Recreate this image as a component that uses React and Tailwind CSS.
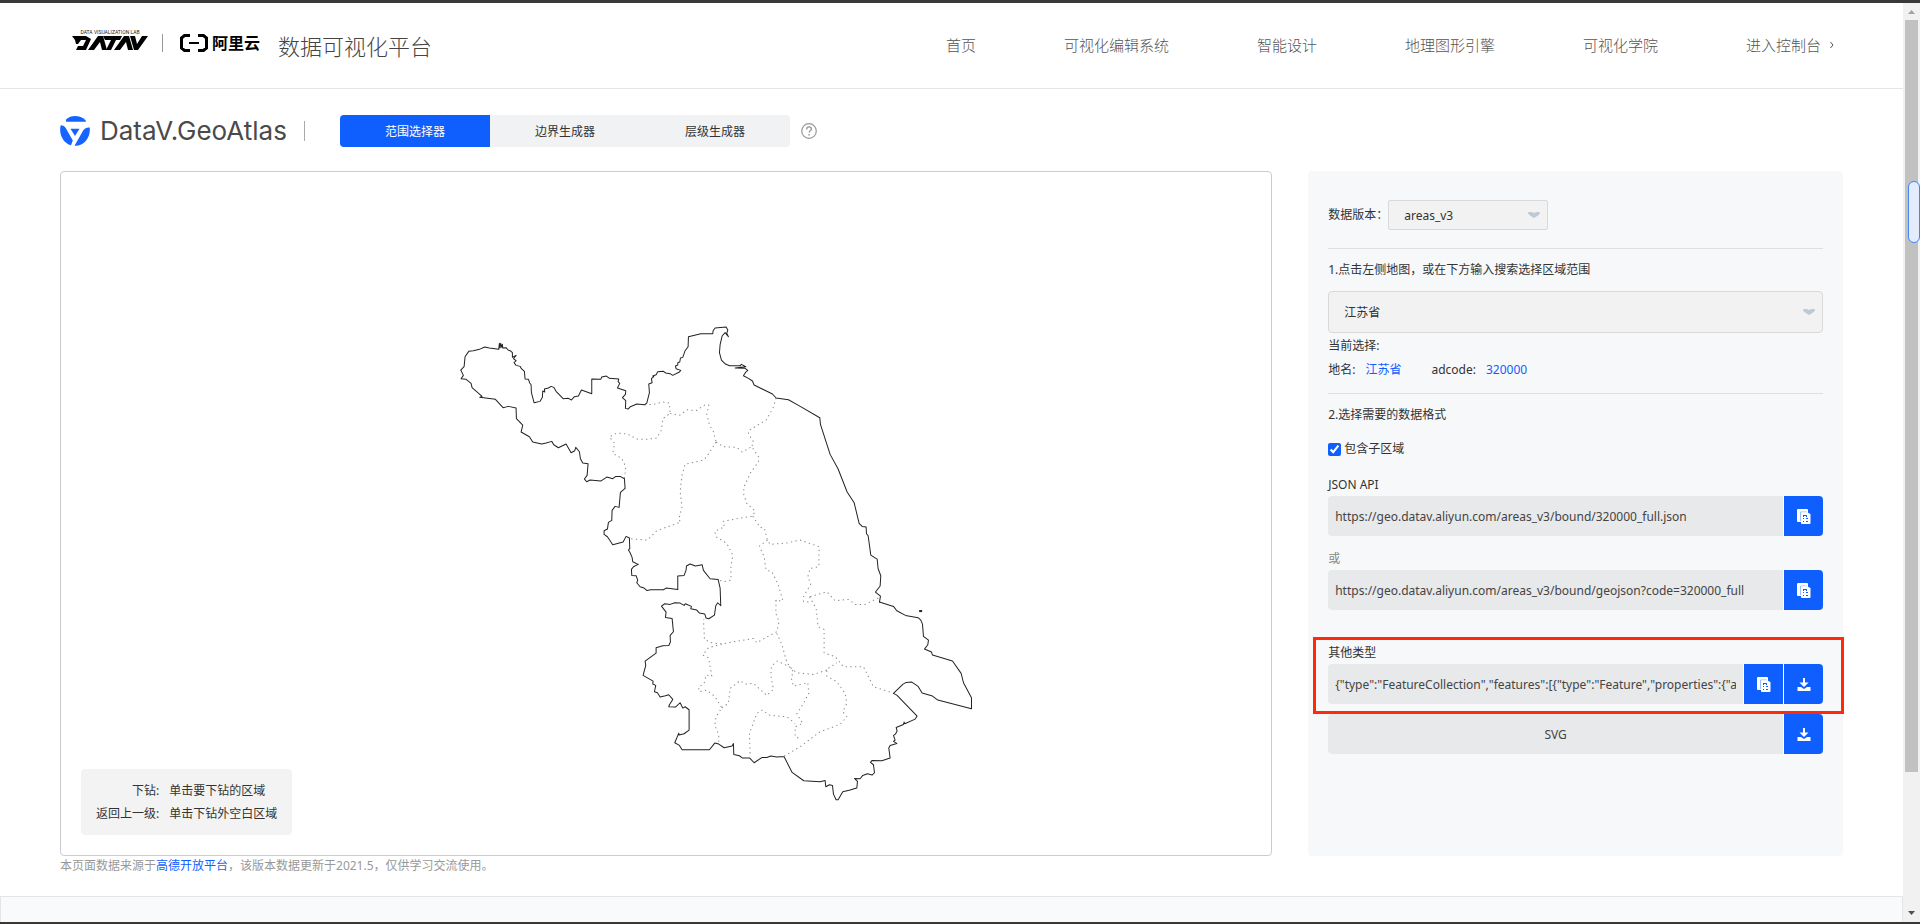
const OUTLINE_NW =
  "M594 763 578 755 576 742 570 728 565 720 569 716 568 684 558 679 549 696 518 704 502 680 492 673 492 662 502 657 505 637 515 631 516 601 525 589 537 592 541 547 555 535 553 506 540 499 527 499 518 506 500 501 482 513 450 510 440 515 433 507 441 496 444 461 428 459 421 446 418 425 407 412 404 422 393 428 378 402 355 413 341 404 335 394 318 399 305 402 278 396 268 380 243 366 248 345 229 326 228 294 205 289 189 293 166 268 119 262 126 259 96 233 93 220 78 208 63 206 70 196 62 180 72 170 75 140 86 124 100 122 118 118 134 111 148 114 176 118 178 100 180 114 182 100 185 112 187 103 188 114 198 113 204 120 212 123 217 128 217 142 228 136 220 146 228 152 222 158 228 166 240 169 244 176 253 184 255 207 265 208 269 219 273 224 274 248 282 278 300 274 307 262 308 243 314 246 313 237 325 234 333 229 341 232 348 244 369 266 385 265 394 270 403 260 415 258 424 240 455 251 455 207 482 208 485 201 499 198 508 205 536 207 534 215 539 220 532 234 557 242 556 253 547 263 557 272 556 295 564 297 571 290 590 282 614 284 620 279 628 248 626 222 636 218 634 206 641 200 638 198 648 194 653 185 670 184 677 189 690 191 698 196 718 186 722 181 708 176 706 168 713 165 713 158 719 156 721 144 728 142 735 122 744 110 745 80 782 71 818 71 819 62 825 54 858 51 863 60 860 70 865 80 855 68 846 78 840 104 838 128 844 150 856 162 868 167 900 167";
const OUTLINE_EAST =
  "M180 167 184 163 197 170 165 174 195 175 203 181 197 186 190 197 205 205 217 213 222 225 277 252 288 264 325 269 355 286 419 323 421 343 450 433 474 477 501 546 522 578 537 640 546 649 558 651 559 671 564 677 572 735 591 747 594 776 602 797 600 828 586 846 601 858 598 876";
const OUTLINE_SOUTH =
  "M898 126 940 139 950 152 976 166 1014 173 1022 180 1027 192 1030 229 1045 240 1043 254 1033 267 1054 276 1057 285 1117 303 1143 340 1150 368 1174 413 1174 446 1073 420 1057 408 1026 399 1014 379 995 366 978 367 968 373 940 400 950 405 1011 468 1005 477 974 491 972 486 970 493 948 502 951 513 946 522 940 526 945 540 940 544 950 550 930 556 926 564 930 594 905 602 876 601 871 607 880 614 883 638 876 645 862 641 848 646 840 656 823 655 832 664 830 684 822 686 810 690 788 695 774 719 768 719 760 702 757 676 748 674 737 680 735 661 720 665 671 662 636 637 612 590 600 590 590 591 572 588 560 592 546 592 522 608 509 594 487 594 478 587 461 583 460 550 456 558 432 563 416 552 404 549 388 569 306 569 298 556 284 548 296 519 297 525 312 521 327 510 327 449 315 440 308 444 300 428 286 441 266 440 268 434 278 418 266 404 256 407 240 411 232 398 223 395 227 376 218 372 219 363 189 346 197 316 195 303 228 279 228 263 248 257 266 256 271 246 270 226 280 215 276 175 256 172 258 156 244 138 254 131 270 133 284 128 300 129 312 136 316 131 334 139 332 146 350 150 358 159 374 162 378 174 386 176 403 165 407 137 413 128 422 137 420 84 414 58 390 56 370 31 366 14 346 18 330 12 319 18 318 30 312 46 293 48 293 88 258 84 250 89 212 89 200 91 192 84 180 80 170 68 173 60 168 47 155 46 154 28 160 20 174 13";

const INNER_NW =
  "M614 284 640 283 668 276 688 279 690 310 668 326 664 360 650 384 620 388 590 387 562 372 545 370 530 369 508 381 524 400 518 430 545 445 557 470 553 506 M690 310 718 316 742 299 768 302 795 284 806 285 800 312 808 345 820 365 828 396 M828 396 800 440 790 450 735 463 726 495 720 545 726 590 716 628 722 636 650 662 622 690 568 686";
const INNER_EAST =
  "M108 396 130 410 170 412 186 426 215 410 235 440 235 455 210 490 192 530 190 550 200 580 225 603 218 618 160 628 128 634 133 650 104 664 108 680 140 700 158 735 152 775 153 810 130 815 114 809 M288 264 278 296 258 330 205 362 205 372 220 395 215 410 M218 618 240 652 253 655 262 690 270 703 320 699 360 690 417 710 416 770 390 775 383 800 392 822 370 860 370 874 388 876 M262 690 238 708 252 740 258 780 275 785 295 825 308 872 285 872";
const INNER_SOUTH =
  "M588 120 587 160 597 185 590 215 576 222 530 248 520 235 450 247 425 252 395 248 373 238 370 178 M590 220 606 255 618 300 628 320 650 338 700 343 740 330 M425 252 385 263 368 285 385 293 392 330 395 348 378 345 372 370 355 382 358 395 380 390 405 410 425 443 408 470 404 495 416 525 416 550 M425 443 445 430 450 385 480 362 495 372 520 370 560 406 580 388 572 345 574 318 592 303 628 320 640 335 633 352 640 378 683 368 686 400 670 430 650 462 668 490 645 500 645 530 660 536 M510 580 508 520 530 460 546 450 570 466 620 470 645 490 M612 588 660 560 720 515 780 493 800 470 788 455 800 430 795 400 770 365 740 348 740 328 770 308 M688 110 708 145 714 200 732 208 732 278 765 290 790 320 850 320 880 380 918 392 940 400 M690 110 740 95 765 122 805 118 825 133 855 133 898 112";

const NW = "translate(440 310) scale(0.33333)";
const EAST = "translate(680 310) scale(0.33333)";
const SOUTH = "translate(580 560) scale(0.33333)";

function ProvinceMap() {
  return (
    <svg viewBox="61 172 1210 683" className="block w-full" role="img" aria-label="江苏省">
      <g fill="none" stroke="#888" strokeWidth="3" strokeDasharray="4 10" strokeLinejoin="round">
        <path transform={NW} d={INNER_NW} />
        <path transform={EAST} d={INNER_EAST} />
        <path transform={SOUTH} d={INNER_SOUTH} />
      </g>
      <g fill="none" stroke="#222" strokeWidth="3" strokeLinejoin="round" strokeLinecap="round">
        <path transform={NW} d={OUTLINE_NW} />
        <path transform={EAST} d={OUTLINE_EAST} />
        <path transform={SOUTH} d={OUTLINE_SOUTH} />
      </g>
      <rect x="919" y="610" width="3" height="2" fill="#222" />
    </svg>
  );
}

function DatavLogo() {
  return (
    <svg viewBox="0 0 76 28" className="h-7 w-[76px]" role="img" aria-label="DataV">
      <text x="38" y="5" fontSize="5" textAnchor="middle" fontFamily="Roboto, sans-serif" fill="#222">DATA VISUALIZATION LAB</text>
      <g fill="#000">
        <path d="M0 7h14l5 3-5 11H4l2-4h5l3-6H9l-3 4H4l-1-4z" />
        <path d="M16 21 26 7h5l4 14h-5l-2-8-6 8z" />
        <path d="M31 7h19l-2 4h-4l-5 10h-5l5-10h-6z" />
        <path d="M42 21 52 7h5l4 14h-5l-2-8-6 8z" />
        <path d="M58 7h5l2 8 5-8h6L66 21h-4z" />
      </g>
    </svg>
  );
}

function AliyunMark() {
  return (
    <svg viewBox="0 0 30 18" className="h-[18px] w-[30px]" fill="none" stroke="#000" strokeWidth="3" aria-hidden="true">
      <path d="M11 1.500H5.500l-3 2.500v10l3 2.500H11M19 1.500h5.500l3 2.500v10l-3 2.500H19" />
      <path d="M10 9h10" strokeWidth="2" />
    </svg>
  );
}

function GeoMark() {
  return (
    <svg viewBox="0 0 30 30" className="size-[30px] shrink-0" fill="#1664ff" aria-hidden="true">
      <path d="M6 5.700V3.500C11 -1.200 20 -1.200 25.500 4.200L26 5.700z" />
      <path d="M.7 9.200C3 9.200 4.800 10 6 12.400L12.800 24.500 11 29.300C3 27-1.500 18 .7 9.200z" />
      <path d="M29.700 11.500C31 21 24 30.500 14.500 29.800L23.200 14.500C24.800 12 27 11.200 29.700 11.500z" />
      <path d="M10.500 12.800h9L15 20z" />
    </svg>
  );
}

function CopyIcon() {
  return (
    <svg viewBox="0 0 14 15" className="h-[15px] w-[14px]" aria-hidden="true">
      <rect width="11" height="13" rx="1" fill="#fff" />
      <path d="M3.500 12V3h6" fill="none" stroke="#9dbdff" strokeWidth="1" />
      <path d="M4 3.500h6.500L13.500 5v9a1 1 0 0 1-1 1H5a1 1 0 0 1-1-1z" fill="#fff" />
      <path d="M6 6h4v1H7v1H6zM9 6h1v2H9zM6 9h1v1H6zM9 9h2v1H9zM6 12h1v1H6zM9 12h2v1H9z" fill="#0f5fff" />
    </svg>
  );
}

function DownloadIcon() {
  return (
    <svg viewBox="0 0 14 13" className="h-[13px] w-[14px]" fill="#fff" aria-hidden="true">
      <path d="M6 0h2v4.500h3.500L7 9 2.500 4.500H6z" />
      <path d="M.5 9h3.500L7 11l3-2h3.500v4H.5z" />
    </svg>
  );
}

function Caret() {
  return (
    <svg viewBox="0 0 12 6" className="pointer-events-none absolute right-2 top-1/2 h-[6px] w-[12px] -translate-y-1/2" fill="#bcc9d6" aria-hidden="true">
      <path d="M.5 0h3L6 1l2.500-1h3L12 1.500 10 3.500 6 6 2 3.500 0 1.500z" />
    </svg>
  );
}

const NAV = ["首页", "可视化编辑系统", "智能设计", "地理图形引擎", "可视化学院"];
const TABS = ["范围选择器", "边界生成器", "层级生成器"];

function ActionButton({ label, last, children }) {
  return (
    <button
      type="button"
      aria-label={label}
      className={
        last
          ? "flex h-10 w-10 shrink-0 items-center justify-center rounded-r border-l border-white bg-[#0f5fff]"
          : "flex h-10 w-10 shrink-0 items-center justify-center border-l border-white bg-[#0f5fff]"
      }
    >
      {children}
    </button>
  );
}

function TextField({ id, value }) {
  return (
    <input
      id={id}
      readOnly
      value={value}
      className="h-10 min-w-0 flex-1 rounded-l bg-[#e7e9eb] px-[7px] text-[12px] text-[#444] outline-none"
    />
  );
}

export default function App() {
  return (
    <div className="flex min-h-screen flex-col border-t-[3px] border-b-2 border-[#3a3737] bg-white font-['Noto_Sans','Noto_Sans_CJK_SC',sans-serif] text-[12px] leading-[18px] text-[#333]">
      <div className="flex flex-1">
        <div className="flex min-w-0 flex-1 flex-col">
          <header className="flex h-[86px] items-center justify-between border-b border-[#e5e5e5] pl-[72px] pr-[68px]">
            <div className="flex items-center">
              <div className="flex items-center pb-1.5">
                <DatavLogo />
                <span className="ml-3.5 h-[18px] w-px bg-[#999]" />
                <span className="ml-4 flex items-center gap-[3px] text-[16px] font-bold leading-6 text-black">
                  <AliyunMark />
                  阿里云
                </span>
              </div>
              <span className="ml-[18px] text-[22px] font-light leading-8 text-[#444]">数据可视化平台</span>
            </div>
            <nav className="flex items-center gap-[88px] pb-0.5 text-[15px] font-light leading-6 text-[#555]">
              {NAV.map((item) => (
                <a key={item} href="#" className="whitespace-nowrap">{item}</a>
              ))}
              <a href="#" className="flex items-center gap-2 whitespace-nowrap">
                进入控制台
                <svg viewBox="0 0 6 8" className="h-2 w-1.5" fill="none" stroke="#555" aria-hidden="true">
                  <path d="M1.500 1l2.500 3-2.500 3" />
                </svg>
              </a>
            </nav>
          </header>

          <main className="px-[60px] pt-[26px]">
            <div className="flex h-8 items-center">
              <h1 className="flex w-[232px] items-center gap-2.5 whitespace-nowrap font-[Inter,sans-serif] text-[26px] font-normal leading-8 text-[#4a4a4a]">
                <GeoMark />
                DataV.GeoAtlas
              </h1>
              <span className="ml-3 h-5 w-px bg-[#aaa]" />
              <div role="tablist" className="ml-[35px] flex overflow-hidden rounded bg-[#f1f2f4]">
                {TABS.map((tab, i) => (
                  <button
                    key={tab}
                    type="button"
                    role="tab"
                    aria-selected={i === 0}
                    className={i === 0 ? "h-8 w-[150px] bg-[#0f5fff] pt-0.5 text-white" : "h-8 w-[150px] pt-0.5"}
                  >
                    {tab}
                  </button>
                ))}
              </div>
              <button type="button" aria-label="帮助" className="ml-[11px]">
                <svg viewBox="0 0 16 16" className="size-4" fill="none" stroke="#999" aria-hidden="true">
                  <circle cx="8" cy="8" r="7.300" strokeWidth="1.200" />
                  <path d="M5.600 6.500C5.600 3 10.400 3.200 10.400 6c0 1.700-2.300 1.700-2.300 3.500" strokeWidth="1.400" />
                  <path d="M8.100 11v1.500" strokeWidth="1.500" />
                </svg>
              </button>
            </div>

            <div className="mt-6 grid grid-cols-[68fr_30fr] gap-x-9">
              <section className="relative rounded border border-[#ccc]">
                <ProvinceMap />
                <dl className="absolute bottom-5 left-5 grid grid-cols-[auto_auto] gap-x-2.5 gap-y-[5px] rounded bg-[#f3f3f3] px-[15px] pb-3 pt-[13px]">
                  <dt className="text-right">下钻:</dt>
                  <dd>单击要下钻的区域</dd>
                  <dt className="text-right">返回上一级:</dt>
                  <dd>单击下钻外空白区域</dd>
                </dl>
              </section>

              <aside className="rounded bg-[#f7f8fa] px-5 pt-[29px]">
                <div className="flex items-center">
                  <label htmlFor="version">数据版本：</label>
                  <span className="relative">
                    <select id="version" className="block h-[30px] w-40 appearance-none rounded-xs border border-[#d9d9d9] bg-[#f2f2f2] px-[15px] pt-0.5 text-[12px]">
                      <option>areas_v3</option>
                    </select>
                    <Caret />
                  </span>
                </div>
                <hr className="mt-[18px] border-[#dcdfe3]" />

                <label htmlFor="region" className="mt-3 block">1.点击左侧地图，或在下方输入搜索选择区域范围</label>
                <div className="relative mt-3">
                  <select id="region" className="block h-[42px] w-full appearance-none rounded border border-[#d9d9d9] bg-[#f2f2f2] px-[15px] pt-0.5 text-[12px]">
                    <option>江苏省</option>
                  </select>
                  <Caret />
                </div>
                <p className="mt-1">当前选择:</p>
                <p className="mt-1.5 flex">
                  <span>地名:</span>
                  <span className="ml-2.5 text-[#0f5fff]">江苏省</span>
                  <span className="ml-[30px]">adcode:</span>
                  <span className="ml-2.5 text-[#0f5fff]">320000</span>
                </p>
                <hr className="mt-3.5 border-[#dcdfe3]" />

                <p className="mt-3">2.选择需要的数据格式</p>
                <label className="mt-4 flex items-center gap-[3px]">
                  <input type="checkbox" defaultChecked className="size-[13px] accent-[#0f5fff]" />
                  包含子区域
                </label>

                <label htmlFor="json" className="mt-[18px] block">JSON API</label>
                <div className="mt-0.5 flex">
                  <TextField id="json" value="https://geo.datav.aliyun.com/areas_v3/bound/320000_full.json" />
                  <ActionButton label="复制" last><CopyIcon /></ActionButton>
                </div>
                <label htmlFor="geojson" className="mt-[14px] block text-[#888]">或</label>
                <div className="mt-0.5 flex">
                  <TextField id="geojson" value="https://geo.datav.aliyun.com/areas_v3/bound/geojson?code=320000_full" />
                  <ActionButton label="复制" last><CopyIcon /></ActionButton>
                </div>

                <div className="relative mt-[34px]">
                  <label htmlFor="other" className="block">其他类型</label>
                  <div className="mt-0.5 flex">
                    <TextField id="other" value={'{"type":"FeatureCollection","features":[{"type":"Feature","properties":{"adcode":320100'} />
                    <ActionButton label="复制"><CopyIcon /></ActionButton>
                    <ActionButton label="下载" last><DownloadIcon /></ActionButton>
                  </div>
                  <div className="pointer-events-none absolute -bottom-2.5 -left-[15px] -right-[21px] -top-[7px] border-[3px] border-[#ff2a0a]" />
                </div>
                <div className="mt-2.5 flex">
                  <div className="flex h-10 flex-1 items-center justify-center rounded-l bg-[#e7e9eb] pt-0.5 text-[#444]">SVG</div>
                  <ActionButton label="下载" last><DownloadIcon /></ActionButton>
                </div>
              </aside>
            </div>
            <p className="mt-px text-[#999]">
              本页面数据来源于<a href="#" className="text-[#0f5fff]">高德开放平台</a>，该版本数据更新于2021.5，仅供学习交流使用。
            </p>
          </main>
          <footer className="mt-[21px] flex-1 border border-b-0 border-[#e5e5e5] bg-[#f9fafc]" />
        </div>

        <div className="relative flex w-[17px] shrink-0 flex-col items-center bg-[#f1f1f1]" aria-hidden="true">
          <svg viewBox="0 0 17 17" className="size-[17px]" fill="#a3a3a3"><path d="M5 11h7L8.500 7z" /></svg>
          <div className="w-[13px] grow-[752] bg-[#c1c1c1]" />
          <div className="grow-[133]" />
          <svg viewBox="0 0 17 17" className="size-[17px]" fill="#505050"><path d="M5 6h7l-3.500 4z" /></svg>
          <div className="absolute right-0 top-[178px] h-[62px] w-3 rounded-full border border-[#4285f4] bg-[#e3ecfe]" />
        </div>
      </div>
    </div>
  );
}
